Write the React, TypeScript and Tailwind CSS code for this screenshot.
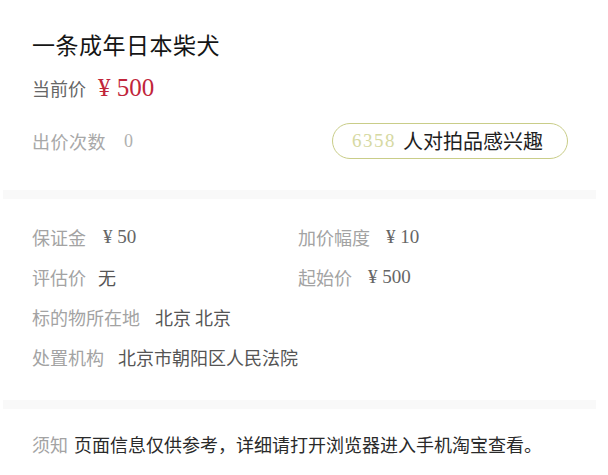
const sans = "font-['Noto_Sans_CJK_SC','Noto_Sans',sans-serif]";
const serif = "font-['Liberation_Serif','Noto_Sans_CJK_SC',serif]";

function Field({ label, value, serifValue = false, gap = "ml-3" }: { label: string; value: string; serifValue?: boolean; gap?: string }) {
  return (
    <div className="flex items-center h-[40px]">
      <span className="text-[18px] text-[#a3a3a3]">{label}</span>
      <span className={`${gap} ${serifValue ? `${serif} text-[19px] text-[#666]` : "text-[18px] text-[#555]"}`}>{value}</span>
    </div>
  );
}

export default function App() {
  return (
    <div className={`w-[608px] h-[475px] bg-white overflow-hidden ${sans}`}>
      <section className="px-8 pt-[27px]">
        <h1 className="h-[34px] flex items-center text-[23px] leading-none text-[#151515] font-normal tracking-[0.5px]">
          一条成年日本柴犬
        </h1>
        <div className="mt-[10px] h-[34px] flex items-center">
          <span className="text-[18px] text-[#666]">当前价</span>
          <span className={`ml-3 ${serif} text-[25px] text-[#c1253a]`}>¥ 500</span>
        </div>
        <div className="mt-[18px] h-[36px] flex items-center justify-between pr-[8px]">
          <div className="flex items-center">
            <span className="text-[18px] text-[#a8a8a8] tracking-[0.5px]">出价次数</span>
            <span className={`ml-[18px] ${serif} text-[18px] text-[#b0b0b0]`}>0</span>
          </div>
          <div className="h-[36px] w-[236px] rounded-full border-[1.5px] border-[#c9cd88] flex items-center pl-[19px]">
            <span className={`${serif} text-[19px] text-[#d6d9a2] tracking-[1.5px]`}>6358</span>
            <span className="ml-[7px] text-[20px] text-[#1e1e1e]">人对拍品感兴趣</span>
          </div>
        </div>
      </section>

      <div className="mt-[31px] h-[9px] mx-[3px] mr-[12px] bg-[#f9f9f9]" />

      <section className="px-8 pt-[18px]">
        <div className="grid grid-cols-[266px_1fr]">
          <Field label="保证金" value="¥ 50" serifValue gap="ml-[17px]" />
          <Field label="加价幅度" value="¥ 10" serifValue gap="ml-[16px]" />
          <Field label="评估价" value="无" gap="ml-[12px]" />
          <Field label="起始价" value="¥ 500" serifValue gap="ml-[16px]" />
        </div>
        <Field label="标的物所在地" value="北京 北京" gap="ml-[15px]" />
        <Field label="处置机构" value="北京市朝阳区人民法院" gap="ml-[14px]" />
      </section>

      <div className="mt-[23px] h-[9px] mx-[3px] mr-[12px] bg-[#f9f9f9]" />

      <section className="px-8 pt-[15px]">
        <div className="h-[40px] flex items-center text-[18px]">
          <span className="text-[#a3a3a3]">须知</span>
          <span className="ml-[6px] text-[#2a2a2a]">页面信息仅供参考，详细请打开浏览器进入手机淘宝查看。</span>
        </div>
      </section>
    </div>
  );
}
